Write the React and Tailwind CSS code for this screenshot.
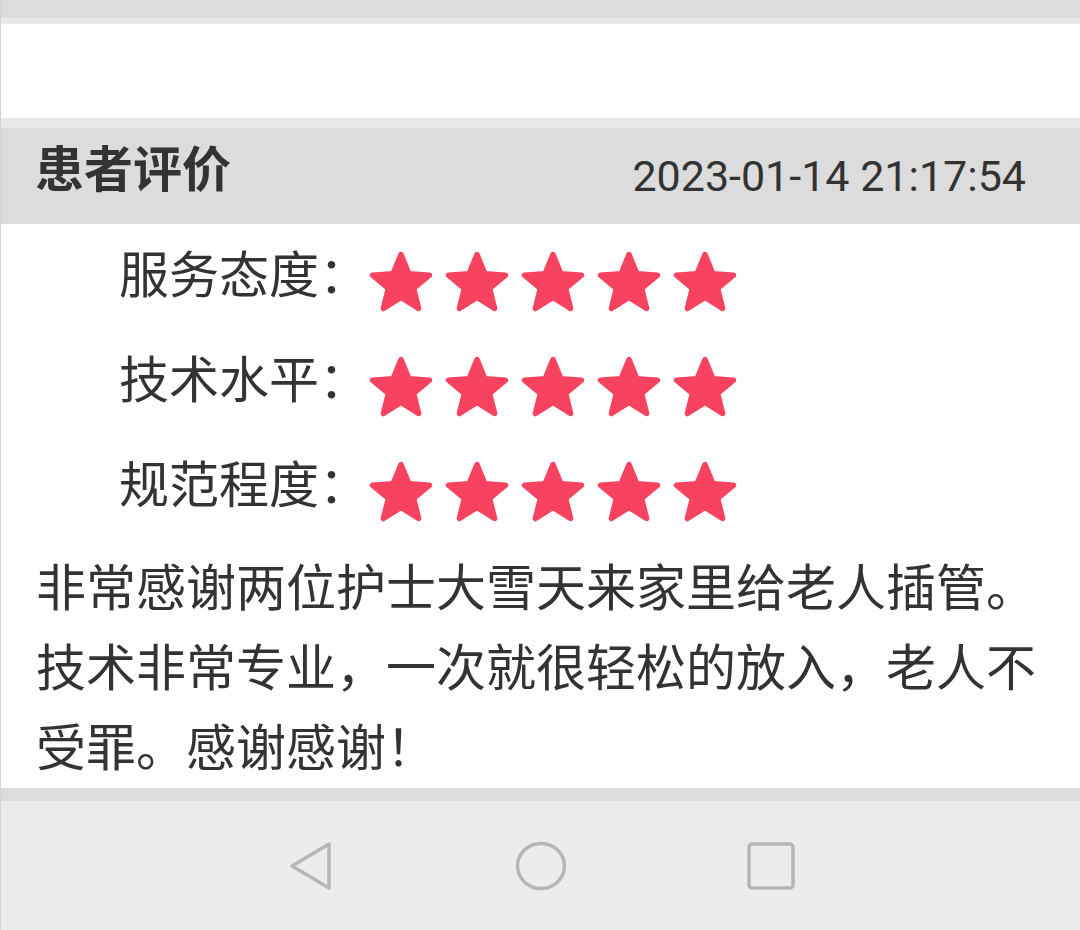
import React from "react";

const cjk = { fontFamily: '"Noto Sans CJK SC", "Noto Sans", sans-serif' };

// ── Rounded rating star ────────────────────────────────────────────────────
function Star() {
  return (
    <svg width="64" height="62" viewBox="0 0 64 62" className="shrink-0">
      <polygon
        points="32,3.5 39.9,22.7 60.5,24.2 44.6,37.4 49.6,57.5 32,46.5 14.4,57.5 19.4,37.4 3.5,24.2 24.1,22.7"
        fill="#f7435f"
        stroke="#f7435f"
        strokeWidth="5.5"
        strokeLinejoin="round"
      />
    </svg>
  );
}

function RatingRow({ label }) {
  return (
    <div className="h-[105px] flex items-center pl-[118px]">
      <span className="w-[250px] pb-[22px] text-[50px] leading-none text-[#333]">
        {label}：
      </span>
      <div className="flex gap-[12px]">
        {[0, 1, 2, 3, 4].map((i) => (
          <Star key={i} />
        ))}
      </div>
    </div>
  );
}

// ── Android navigation bar ─────────────────────────────────────────────────
function NavBar() {
  return (
    <div className="h-[129px] bg-[#ececec] flex items-center justify-center">
      <div className="w-[230px] flex justify-center">
        <svg width="44" height="50" viewBox="0 0 44 50">
          <path
            d="M40 3 L3 25 L40 47 Z"
            fill="none"
            stroke="#b6b6b6"
            strokeWidth="3.5"
            strokeLinejoin="round"
          />
        </svg>
      </div>
      <div className="w-[230px] flex justify-center">
        <svg width="52" height="50" viewBox="0 0 52 50">
          <ellipse cx="26" cy="25" rx="23.5" ry="22.5" fill="none" stroke="#b6b6b6" strokeWidth="3.5" />
        </svg>
      </div>
      <div className="w-[230px] flex justify-center">
        <svg width="48" height="48" viewBox="0 0 48 48">
          <rect x="2" y="2" width="44" height="44" rx="3" fill="none" stroke="#b6b6b6" strokeWidth="3.5" />
        </svg>
      </div>
    </div>
  );
}

export default function App() {
  return (
    <div className="w-[1080px] h-[930px] overflow-hidden bg-white border-l border-[#d4d4d4]" style={cjk}>
      <div className="h-[18px] bg-[#dcdcdc]" />
      <div className="h-[6px] bg-[#e8e8e8]" />
      <div className="h-[94px] bg-white" />
      <div className="h-[10px] bg-[#e8e8e8]" />

      {/* ── Header ─────────────────────────────────────────── */}
      <div className="h-[96px] bg-[#dcdcdc] flex items-center justify-between pl-[34px] pr-[54px]">
        <span className="pb-[22px] text-[49px] font-bold leading-none text-[#333]">患者评价</span>
        <span
          className="text-[43px] leading-none text-[#333]"
          style={{ fontFamily: "Roboto, sans-serif" }}
        >
          2023-01-14 21:17:54
        </span>
      </div>

      {/* ── Ratings ────────────────────────────────────────── */}
      <div className="pt-[5px]">
        <RatingRow label="服务态度" />
        <RatingRow label="技术水平" />
        <RatingRow label="规范程度" />
      </div>

      <p className="pl-[35px] pr-[30px] pb-[4px] text-[50px] leading-[80px] text-[#333]">
        非常感谢两位护士大雪天来家里给老人插管。技术非常专业，一次就很轻松的放入，老人不受罪。感谢感谢！
      </p>

      <div className="h-[13px] bg-[#dcdcdc]" />
      <NavBar />
    </div>
  );
}
